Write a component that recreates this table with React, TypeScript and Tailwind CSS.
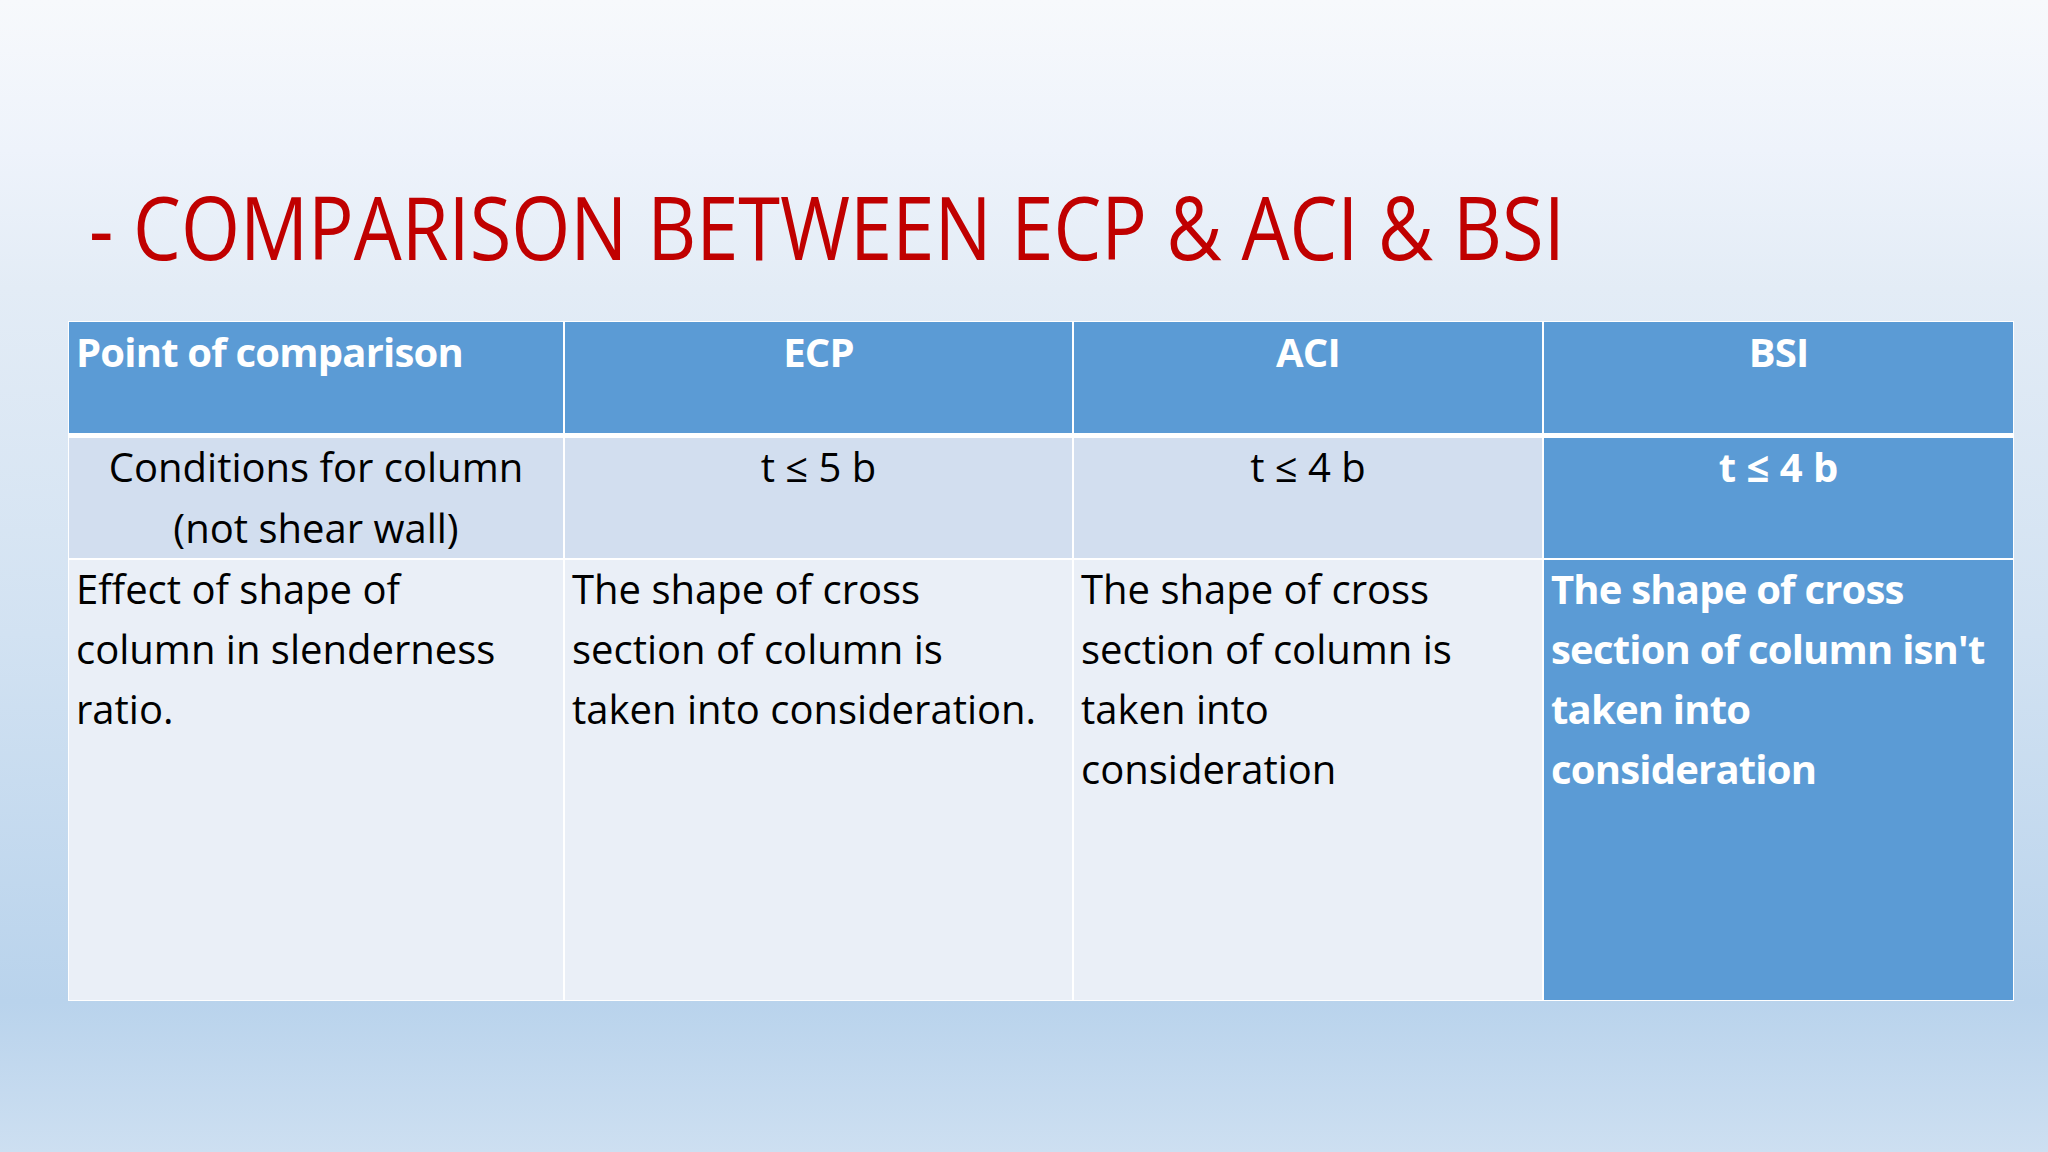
import React from 'react';

const body = "font-['Open_Sans',sans-serif] text-[40px]";

const App: React.FC = () => {
  return (
    <div className={`w-[2048px] h-[1152px] overflow-hidden bg-[linear-gradient(to_bottom,#f7f9fc_0%,#eef3fb_13%,#e3ecf6_25%,#d2e2f2_55%,#b9d3ec_87%,#cddff1_100%)] ${body}`}>
      {/* title */}
      <div className="pt-[182px] pl-[89px] h-[269px]">
        <h1 className="origin-left scale-x-[0.862] whitespace-nowrap text-[88px] leading-[88px] font-normal text-[#c00000]">
          - COMPARISON BETWEEN ECP &amp; ACI &amp; BSI
        </h1>
      </div>

      {/* table */}
      <div className="ml-[68px] mt-[52px] w-[1946px] bg-white p-px flex flex-col">
        <div className="grid grid-cols-[494px_507px_468px_469px] gap-x-[2px] h-[111px] bg-white">
          <div className="bg-[#5b9bd5] px-[7px] text-white font-bold tracking-[-0.02em] leading-[60px]">Point of comparison</div>
          <div className="bg-[#5b9bd5] px-[7px] text-white font-bold tracking-[-0.02em] leading-[60px] text-center">ECP</div>
          <div className="bg-[#5b9bd5] px-[7px] text-white font-bold tracking-[-0.02em] leading-[60px] text-center">ACI</div>
          <div className="bg-[#5b9bd5] px-[7px] text-white font-bold tracking-[-0.02em] leading-[60px] text-center">BSI</div>
        </div>

        <div className="grid grid-cols-[494px_507px_468px_469px] gap-x-[2px] h-[120px] mt-[5px]">
          <div className="bg-[#d2deef] px-[7px] text-black text-center leading-[61px]">
            <div className="-mt-[2px]">Conditions for column<br />(not shear wall)</div>
          </div>
          <div className="bg-[#d2deef] px-[7px] text-black text-center leading-[61px]">
            <div className="-mt-[2px]">t ≤ 5 b</div>
          </div>
          <div className="bg-[#d2deef] px-[7px] text-black text-center leading-[61px]">
            <div className="-mt-[2px]">t ≤ 4 b</div>
          </div>
          <div className="bg-[#5b9bd5] px-[7px] text-white font-bold text-center leading-[61px]">
            <div className="-mt-[2px]">t ≤ 4 b</div>
          </div>
        </div>

        <div className="grid grid-cols-[494px_507px_468px_469px] gap-x-[2px] h-[440px] mt-[2px]">
          <div className="bg-[#eaeff7] px-[7px] text-black leading-[60px] whitespace-nowrap">
            <div className="-mt-[1px]">Effect of shape of<br />column in slenderness<br />ratio.</div>
          </div>
          <div className="bg-[#eaeff7] px-[7px] text-black leading-[60px] whitespace-nowrap">
            <div className="-mt-[1px]">The shape of cross<br />section of column is<br />taken into consideration.</div>
          </div>
          <div className="bg-[#eaeff7] px-[7px] text-black leading-[60px] whitespace-nowrap">
            <div className="-mt-[1px]">The shape of cross<br />section of column is<br />taken into<br />consideration</div>
          </div>
          <div className="bg-[#5b9bd5] px-[7px] text-white font-bold tracking-[-0.02em] leading-[60px] whitespace-nowrap">
            <div className="-mt-[1px]">The shape of cross<br />section of column isn't<br />taken into<br />consideration</div>
          </div>
        </div>
      </div>
    </div>
  );
};

export default App;
